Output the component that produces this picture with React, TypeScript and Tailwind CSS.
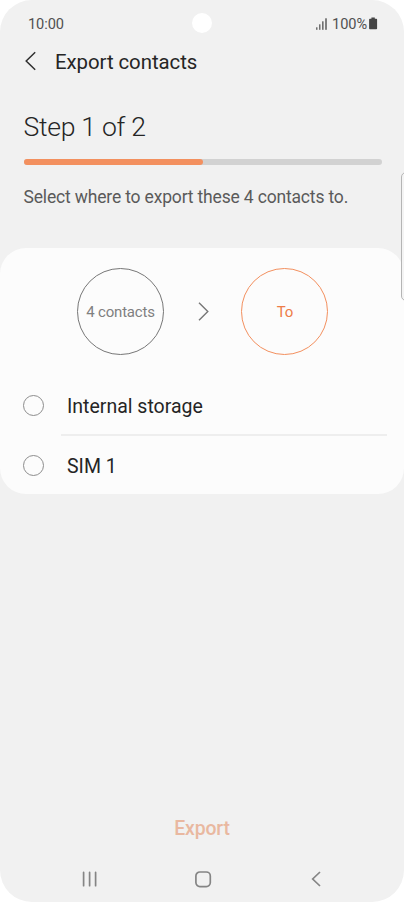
import React from 'react'

const options = ['Internal storage', 'SIM 1']

function StatusBar() {
  return (
    <div className="relative flex h-[46px] items-center justify-between pl-[28px] pr-[26px] pt-[2px] text-[14.6px] tracking-[-0.1px] text-[#505050]">
      <span className="pt-[1px]">10:00</span>
      {/* camera hole */}
      <div className="absolute left-[192px] top-[13px] h-5 w-5 rounded-full bg-white" />
      <div className="flex items-center">
        <svg className="mr-[4px]" width="12" height="12" viewBox="0 0 12 12" fill="#505050">
          <rect x="0.2" y="9.3" width="1.2" height="2.5" />
          <rect x="3.2" y="6.3" width="1.2" height="5.5" />
          <rect x="6.2" y="3.3" width="1.3" height="8.5" />
          <rect x="9.3" y="0.3" width="1.4" height="11.5" />
        </svg>
        <span className="pt-[1px]">100%</span>
        <svg className="-mt-[1px] ml-[2px]" width="9" height="13" viewBox="0 0 9 13" fill="#454545">
          <path d="M2.4 0.5h3.4v1.3h1.5q.8 0 .8.8v8.9q0 .8-.8.8H.9q-.8 0-.8-.8V2.6q0-.8.8-.8h1.5z" />
        </svg>
      </div>
    </div>
  )
}

function Header() {
  return (
    <div className="flex h-[32px] items-center pl-[25px]">
      <svg className="-mt-[2px]" width="12" height="20" viewBox="0 0 12 20" fill="none" stroke="#303030" strokeWidth="1.5">
        <path d="M10.2 1.3L1.2 10L10.2 18.7" />
      </svg>
      <h1 className="ml-[17px] pl-[1px] text-[20.4px] tracking-[-0.06px] text-[#252525]">Export contacts</h1>
    </div>
  )
}

function Step() {
  return (
    <section className="h-[169.5px] pl-[23.5px] pr-[24px] pt-[29px]">
      <h2 className="h-[40px] whitespace-nowrap text-[26.6px] font-light leading-[39px] tracking-[-0.3px] text-[#252525]">Step 1 of 2</h2>
      <div className="mt-[11.5px] h-[6px] w-[358px] rounded-full bg-[#d2d2d2]">
        <div className="h-full w-1/2 rounded-full bg-[#f3905f]" />
      </div>
      <p className="mt-[20.5px] whitespace-nowrap text-[17.5px] leading-[24px] tracking-[-0.17px] text-[#5a5a5a]">
        Select where to export these 4 contacts to.
      </p>
    </section>
  )
}

function TargetCard() {
  return (
    <section className="h-[246.5px] rounded-[26px] bg-[#fcfcfc] pt-[20.5px]">
      <div className="flex items-center pl-[77px]">
        <div className="flex h-[87px] w-[87px] items-center justify-center whitespace-nowrap rounded-full border border-[#777777] pt-[2px] text-[15px] tracking-[-0.18px] text-[#808080]">
          4 contacts
        </div>
        <svg className="ml-[34px] mr-[32px]" width="11" height="20" viewBox="0 0 11 20" fill="none" stroke="#777777" strokeWidth="1.4">
          <path d="M1 0.7L9.8 9.5L1 18.3" />
        </svg>
        <div className="flex h-[87px] w-[87px] items-center justify-center rounded-full border border-[#f3905f] pl-[1px] pt-[2px] text-[15px] tracking-[-0.1px] text-[#ee7d49]">
          To
        </div>
      </div>
      {/* storage options */}
      <div className="mt-[21px]">
        {options.map((name, i) => (
          <div key={name}>
            {i > 0 && <div className="ml-[61px] mr-[17px] h-[2px] bg-[#eeeeee]" />}
            <label className="flex h-[58px] items-center pl-[23px] text-[19.5px] text-[#252525]">
              <span className="mr-[23px] h-[21px] w-[21px] rounded-full border border-[#8d8d8d]" />
              <span className="pt-[3px]">{name}</span>
            </label>
          </div>
        ))}
      </div>
    </section>
  )
}

function NavBar() {
  return (
    <nav className="flex h-[46px] items-center justify-center gap-[97px] pl-[2px]">
      <svg width="16" height="16" viewBox="0 0 16 16" fill="none" stroke="#858585" strokeWidth="1.7" strokeLinecap="round">
        <path d="M1.6 1.3V14.7M7.6 1.3V14.7M13.6 1.3V14.7" />
      </svg>
      <svg width="17" height="17" viewBox="0 0 17 17" fill="none" stroke="#858585" strokeWidth="1.7">
        <rect x="0.9" y="1" width="14.4" height="14.6" rx="4" />
      </svg>
      <svg width="16" height="16" viewBox="0 0 16 16" fill="none" stroke="#858585" strokeWidth="1.7">
        <path d="M11 1L3.7 8L11 15" />
      </svg>
    </nav>
  )
}

export default function App() {
  return (
    <div className="h-[902px] w-[405px] overflow-hidden bg-white font-['Roboto',sans-serif]">
      <div className="relative flex h-full w-[404px] flex-col overflow-hidden rounded-[32px] bg-[#f1f1f1]">
        <StatusBar />
        <Header />
        <Step />
        <TargetCard />
        <div className="flex flex-1 items-end justify-center pb-[13px]">
          <button className="text-[19.4px] font-medium tracking-[-0.15px] text-[#e9b8a0]">Export</button>
        </div>
        <NavBar />
        {/* edge panel handle */}
        <div className="absolute left-[401px] top-[172px] h-[129px] w-[10px] rounded-[5px] border border-[#b5b5b5] bg-[#f4f4f4]" />
      </div>
    </div>
  )
}
